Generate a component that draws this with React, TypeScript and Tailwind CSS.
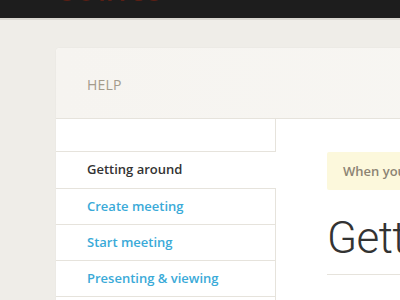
const NAV = ["Create meeting", "Start meeting", "Presenting & viewing", "Audio & video"];

export default function App() {
  return (
    <div className="w-[400px] h-[300px] overflow-hidden bg-[#efede8] font-['Open_Sans',sans-serif]">
      <div className="h-[18px] bg-[#1d1d1d] overflow-hidden flex items-start pl-[62px]">
        <span className="-mt-[19px] text-[22px] leading-[22px] font-bold tracking-[6px] text-[#5a1f14]">sonics</span>
      </div>
      <div className="h-[2px] bg-[#d9d7d1]" />
      <div className="ml-[56px] mt-[28px] w-[900px] rounded-tl-[4px] bg-white shadow-[0_0_2px_rgba(0,0,0,0.06)]">
        <div className="h-[71px] flex items-center pl-[31px] pt-[3px] bg-gradient-to-r from-[#f6f4f0] to-[#f9f8f5] border-b border-[#e6e3dc] rounded-tl-[4px]">
          <span className="text-[14px] text-[#a39b8c] tracking-[0.2px]">HELP</span>
        </div>
        <div className="flex">
          <div className="w-[220px] shrink-0">
            <div className="h-[33px] border-b border-r border-[#e6e3dc]" />
            <div className="h-[36px] flex items-center pl-[31px] text-[13px] font-semibold text-[#333333]">Getting around</div>
            {NAV.map(n => (
              <div key={n} className="h-[36px] flex items-center pl-[31px] border-t border-r border-[#e6e3dc] text-[13px] font-semibold text-[#3aaad8]">{n}</div>
            ))}
          </div>
          <div className="flex-1 pl-[51px] pt-[33px]">
            <div className="h-[38px] w-[500px] flex items-center pl-[16px] pt-[1px] rounded-[2px] bg-[#fcf8dc] text-[13px] font-semibold text-[#8c8474] whitespace-nowrap">When you first join a meeting, here is what you will see.</div>
            <div className="mt-[26px] pb-[14px] w-[500px] border-b border-[#e6e3dc] font-['Roboto',sans-serif] font-light text-[44px] leading-[44px] tracking-[-0.5px] text-[#333333] whitespace-nowrap">Getting around</div>
          </div>
        </div>
      </div>
    </div>
  );
}
